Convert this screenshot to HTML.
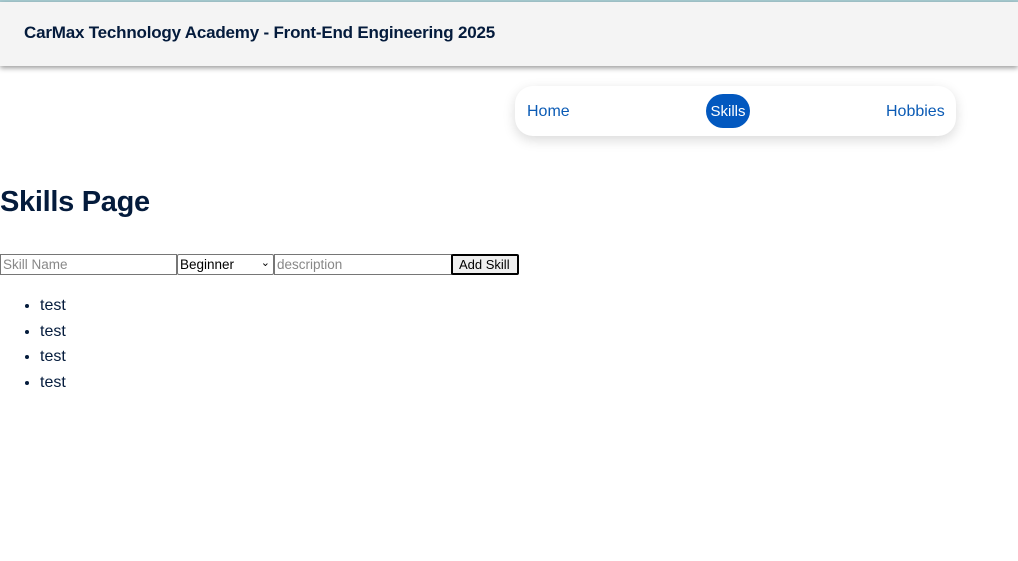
<!DOCTYPE html>
<html><head><style>
body{margin:0;width:1018px;height:561px;background:#fff;font-family:"Liberation Sans",sans-serif;color:#041b3c;position:relative;overflow:hidden}
.top{position:absolute;left:0;top:0;width:1018px;height:2px;background:#a9cdd3}
.hdr{position:absolute;left:0;top:2px;width:1018px;height:64px;background:#f4f4f4;box-shadow:0 2px 5px rgba(0,0,0,.4)}
.hdr span{position:absolute;left:24px;top:21px;font-weight:bold;font-size:17px;letter-spacing:-0.2px;color:#041b3c}
.nav{position:absolute;left:515px;top:86px;width:441px;height:50px;background:#fff;border-radius:18px;box-shadow:0 4px 12px rgba(0,0,0,.15)}
.nav a{position:absolute;top:17px;font-size:16px;color:#0b5bb5;text-decoration:none}
.sk{position:absolute;left:706px;top:94px;width:44px;height:34px;background:#0258bf;border-radius:17px;color:#fff;font-size:15px;text-align:center;line-height:35px}
h1{position:absolute;left:0;top:186px;margin:0;font-size:29px;font-weight:bold;color:#041b3c;letter-spacing:-0.3px}
.f{position:absolute;top:254px;height:21px;box-sizing:border-box;border:1px solid #767676;font-size:13.5px;padding:2px;color:#888;background:#fff;line-height:15px;white-space:nowrap}
ul{position:absolute;left:0;top:297px;margin:0;padding-left:40px;font-size:16px}
li{height:25.5px}
</style></head><body>
<div class="top"></div>
<div class="hdr"><span>CarMax Technology Academy - Front-End Engineering 2025</span></div>
<div class="nav"><a style="left:12px">Home</a><a style="left:371px">Hobbies</a></div>
<div class="sk">Skills</div>
<h1>Skills Page</h1>
<div class="f" style="left:0;width:177px">Skill Name</div>
<div class="f" style="left:177px;width:97px;color:#000;border-radius:2px">Beginner<span style="position:absolute;right:3px;top:1px;font-size:11px">&#8964;</span></div>
<div class="f" style="left:274px;width:178px">description</div>
<div class="f" style="left:451px;width:68px;color:#000;background:#efefef;border:2px solid #000;border-radius:2px;padding:1px 6px;font-size:13px">Add Skill</div>
<ul><li>test</li><li>test</li><li>test</li><li>test</li></ul>
</body></html>
